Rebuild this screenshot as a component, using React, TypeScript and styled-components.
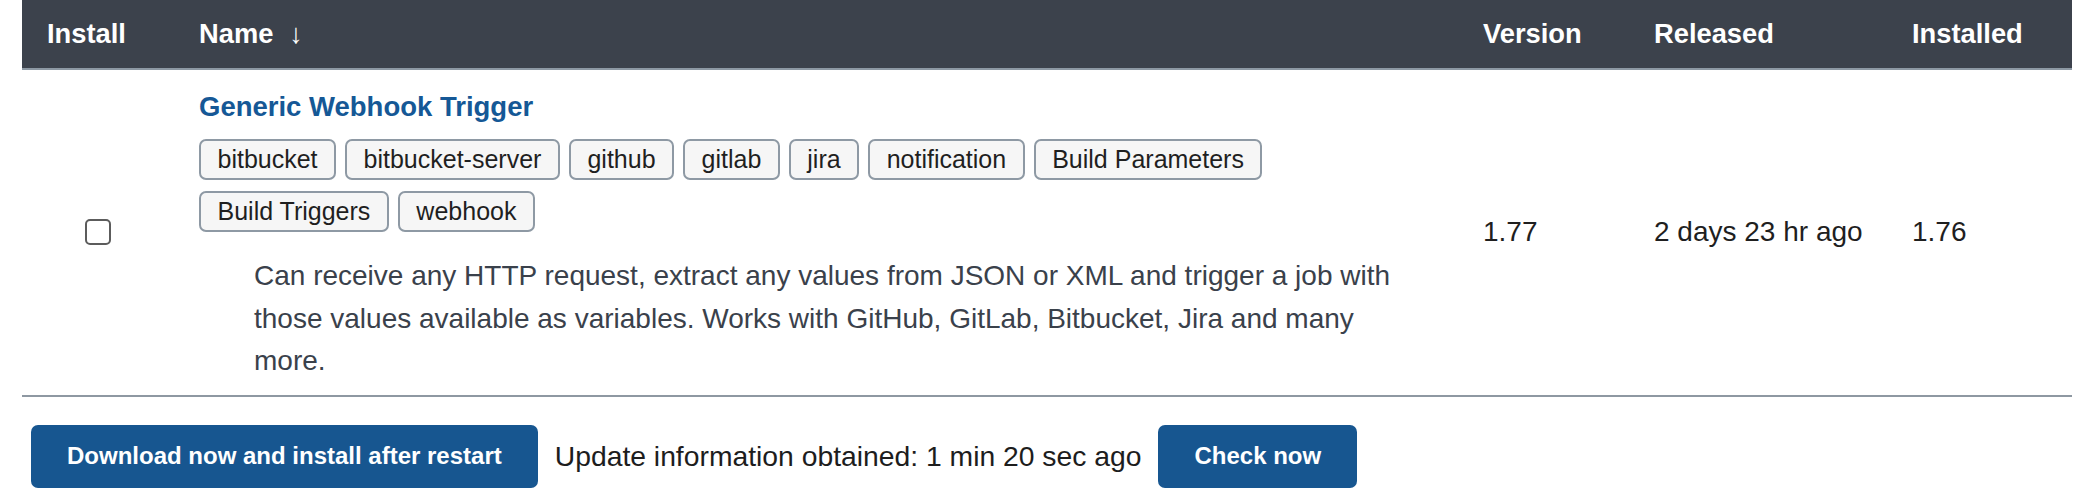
import styled, { createGlobalStyle } from 'styled-components';

const GlobalStyle = createGlobalStyle`
  html, body {
    margin: 0;
    padding: 0;
    background: #ffffff;
    font-family: "Liberation Sans", Arial, Helvetica, sans-serif;
  }
`;

const tags = [
  'bitbucket',
  'bitbucket-server',
  'github',
  'gitlab',
  'jira',
  'notification',
  'Build Parameters',
  'Build Triggers',
  'webhook',
];

export default function App() {
  return (
    <Page>
      <GlobalStyle />
      <Table>
        <colgroup>
          <col style={{ width: 152 }} />
          <col />
          <col style={{ width: 171 }} />
          <col style={{ width: 258 }} />
          <col style={{ width: 185 }} />
        </colgroup>
        <thead>
          <tr>
            <Th>Install</Th>
            <Th>
              Name<SortArrow>↓</SortArrow>
            </Th>
            <Th>Version</Th>
            <Th>Released</Th>
            <Th>Installed</Th>
          </tr>
        </thead>
        <tbody>
          <tr>
            <CheckCell>
              <Checkbox type="checkbox" />
            </CheckCell>
            <NameCell>
              <PluginLink href="#">Generic Webhook Trigger</PluginLink>
              <Tags>
                {tags.map((t) => (
                  <Tag key={t}>{t}</Tag>
                ))}
              </Tags>
              <Excerpt>
                Can receive any HTTP request, extract any values from JSON or XML and trigger a job
                with those values available as variables. Works with GitHub, GitLab, Bitbucket, Jira
                and many more.
              </Excerpt>
            </NameCell>
            <ValueCell>1.77</ValueCell>
            <ValueCell>2 days 23 hr ago</ValueCell>
            <ValueCell>1.76</ValueCell>
          </tr>
        </tbody>
      </Table>
      <Footer>
        <PrimaryButton>Download now and install after restart</PrimaryButton>
        <UpdateInfo>Update information obtained: 1 min 20 sec ago</UpdateInfo>
        <PrimaryButton>Check now</PrimaryButton>
      </Footer>
    </Page>
  );
}

const Page = styled.div`
  padding: 0 26px 0 22px;
`;

const Table = styled.table`
  width: 100%;
  border-collapse: collapse;
  table-layout: fixed;
`;

const Th = styled.th`
  height: 68px;
  padding: 0 25px;
  background: #3c424c;
  border-bottom: 2px solid #8d99a4;
  color: #ffffff;
  font-size: 27.3px;
  font-weight: 700;
  text-align: left;
  vertical-align: middle;
  white-space: nowrap;
`;

const SortArrow = styled.span`
  margin-left: 16px;
  font-weight: 400;
`;

const Td = styled.td`
  border-bottom: 2px solid #8e98a2;
  vertical-align: middle;
`;

const CheckCell = styled(Td)`
  text-align: center;
  padding: 0;
`;

const Checkbox = styled.input`
  appearance: none;
  display: block;
  margin: 0 auto;
  width: 26px;
  height: 26px;
  border: 2px solid #5c5c5c;
  border-radius: 5px;
  background: #ffffff;
  box-sizing: border-box;
`;

const NameCell = styled(Td)`
  padding: 20px 25px 12px 25px;
`;

const PluginLink = styled.a`
  display: block;
  color: #155896;
  font-size: 27.5px;
  font-weight: 700;
  line-height: 34px;
  text-decoration: none;
`;

const Tags = styled.div`
  display: flex;
  flex-wrap: wrap;
  gap: 11px 9px;
  margin-top: 15px;
`;

const Tag = styled.span`
  display: inline-flex;
  align-items: center;
  height: 41px;
  padding: 0 16.5px;
  box-sizing: border-box;
  border: 2px solid #8e99a4;
  border-radius: 7px;
  background: #f6f6f6;
  color: #1f1f1f;
  font-size: 25px;
  white-space: nowrap;
`;

const Excerpt = styled.p`
  margin: 23px 0 0 55px;
  max-width: 1160px;
  color: #3a414b;
  font-size: 28px;
  line-height: 42.5px;
`;

const ValueCell = styled(Td)`
  padding: 0 25px;
  color: #1f1f1f;
  font-size: 28px;
  white-space: nowrap;
`;

const Footer = styled.div`
  display: flex;
  align-items: center;
  gap: 17px;
  margin-top: 28px;
  padding-left: 9px;
`;

const PrimaryButton = styled.button`
  height: 63px;
  padding: 0 36px;
  border: none;
  border-radius: 7px;
  background: #175690;
  color: #ffffff;
  font-family: inherit;
  font-size: 24px;
  font-weight: 700;
  cursor: pointer;
`;

const UpdateInfo = styled.span`
  color: #1d1d1d;
  font-size: 28.3px;
`;
